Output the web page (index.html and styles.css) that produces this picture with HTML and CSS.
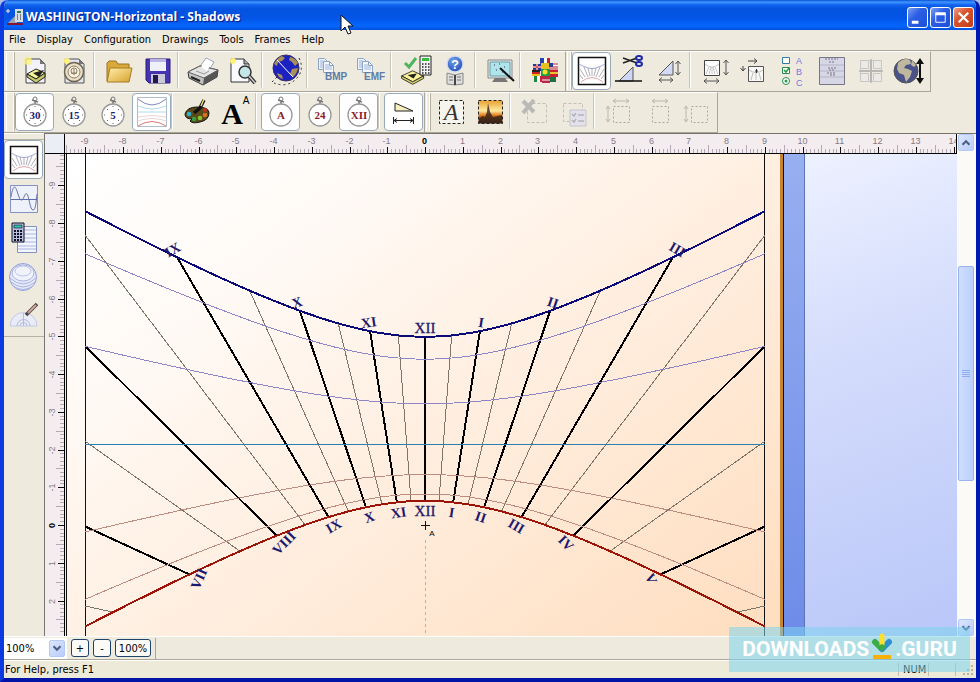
FILE: index.html
```html
<!DOCTYPE html>
<html lang="en">
<head>
<meta charset="utf-8">
<title>WASHINGTON-Horizontal - Shadows</title>
<link rel="stylesheet" href="styles.css">
</head>
<body>
<svg class="defs" aria-hidden="true">
  <defs>
    <linearGradient id="paper" x1="0" y1="0" x2="1" y2="0.9"><stop offset="0" stop-color="#ffffff"/><stop offset=".25" stop-color="#fffaf6"/><stop offset=".5" stop-color="#fff1e5"/><stop offset="1" stop-color="#ffdfc2"/></linearGradient>
    <linearGradient id="band" x1="0" y1="0" x2="0" y2="1"><stop offset="0" stop-color="#98aff0"/><stop offset=".6" stop-color="#6e8ce8"/></linearGradient>
    <linearGradient id="sky" gradientUnits="userSpaceOnUse" x1="805" y1="154" x2="980" y2="640"><stop offset="0" stop-color="#edf1ff"/><stop offset=".35" stop-color="#d6defc"/><stop offset="1" stop-color="#b8c5f8"/></linearGradient>
    <linearGradient id="gold" x1="0" y1="0" x2="1" y2="1"><stop offset="0" stop-color="#fff0a8"/><stop offset="1" stop-color="#d8a030"/></linearGradient>
    <linearGradient id="sunset" x1="0" y1="0" x2="0" y2="1"><stop offset="0" stop-color="#e8a030"/><stop offset=".45" stop-color="#ffe9a0"/><stop offset=".65" stop-color="#e07818"/><stop offset="1" stop-color="#50200c"/></linearGradient>
    <radialGradient id="ball" cx=".4" cy=".3" r=".8"><stop offset="0" stop-color="#6fa0ee"/><stop offset="1" stop-color="#1c48b0"/></radialGradient>
    <clipPath id="dial-clip"><rect x="85" y="154" width="680" height="800"/></clipPath>
    <symbol id="i-chart" viewBox="0 0 32 32">
      <rect x="2.500" y="2.500" width="27" height="27" fill="#fff" stroke="#111" stroke-width="1.500"/>
      <path d="M3 9l4 2 5 2 4 .5 4-.5 5-2 4-2" fill="none" stroke="#a3acd8"/>
      <path d="M4 14l5 8M4 20l3 4M8 12l4 10M12 13l2 8M16 13v8M20 13l-2 8M24 12l-4 10M28 14l-5 8M28 20l-3 4" stroke="#8d8d9c" stroke-width=".7"/>
      <path d="M5 27q11-9 22 0" fill="none" stroke="#e0a4aa"/>
    </symbol>
    <symbol id="i-watch" viewBox="0 0 32 32">
      <circle cx="16" cy="3" r="2" fill="none" stroke="#777"/><path d="M13 4l6 2M16 5v3" stroke="#777" stroke-width="1.500"/>
      <circle cx="16" cy="19" r="11" fill="#fff" stroke="#999" stroke-width="1.300"/>
      <path d="M16 10v1M16 27v1M7 19h1M24 19h1M10 13l1 1M22 13l-1 1M10 25l1-1M22 25l-1-1" stroke="#666"/>
    </symbol>
    <symbol id="i-docs" viewBox="0 0 32 32">
      <path d="M2.500 3.500h6l3 3v8h-9z" fill="#eef4fc" stroke="#8ea4c6"/><path d="M4 6h4M4 8h5M4 10h5M4 12h5" stroke="#9db4d8"/>
      <path d="M7.500 6.500h6l4 4v7h-10z" fill="#f4f8fe" stroke="#8ea4c6"/><path d="M13.500 6.500v4h4" fill="none" stroke="#8ea4c6"/>
      <path d="M9 10h4M9 12h7M9 14h7" stroke="#9db4d8"/>
    </symbol>
    <symbol id="i-dial" viewBox="0 0 32 32">
      <path d="M2 7L15 14 28 7 15 1z" fill="#fbf39a" stroke="#222"/><path d="M2 7v3l13 7 13-7V7L15 14z" fill="#d9cf70" stroke="#222"/><path d="M9 6l11-2-4 6z" fill="#222"/>
    </symbol>
  </defs>
</svg>

<div class="window">
  <header class="titlebar">
    <svg class="app-icon" viewBox="0 0 18 18" aria-hidden="true"><path d="M2 15L11 6v9z" fill="#9aa3ae"/><path d="M1 15h16v2H1z" fill="#8a1230"/><path d="M9 1h8v13H9z" fill="#d6dee8"/><path d="M11 3h4v2h-4z" fill="#2b7a48"/><path d="M11 7h1M14 7h1M11 9h1M14 9h1M11 11h1M14 11h1" stroke="#222"/><path d="M2 1v4M0 3h4" stroke="#ffe9d0"/></svg>
    <h1>WASHINGTON-Horizontal - Shadows</h1>
    <div class="caption-buttons">
      <button class="cap" aria-label="Minimize"><svg viewBox="0 0 20 20"><path d="M4 15h7" stroke="#fff" stroke-width="3"/></svg></button>
      <button class="cap" aria-label="Maximize"><svg viewBox="0 0 20 20"><path d="M5 6.500h10V15H5z" fill="none" stroke="#fff"/><path d="M4.500 6h11" stroke="#fff" stroke-width="3"/></svg></button>
      <button class="cap close" aria-label="Close"><svg viewBox="0 0 20 20"><path d="M5 5l10 10M15 5L5 15" stroke="#fff" stroke-width="2.300"/></svg></button>
    </div>
  </header>

  <nav class="menubar">
    <a href="#">File</a><a href="#">Display</a><a href="#">Configuration</a><a href="#">Drawings</a><a href="#">Tools</a><a href="#">Frames</a><a href="#">Help</a>
  </nav>

  <div class="toolrow">
    <div class="toolbar">
      <i class="grip"></i>
      <button class="tb" aria-label="New sundial"><svg viewBox="0 0 32 32"><path d="M7 4h14l5 5v19H7z" fill="#f2f2fa" stroke="#444"/><path d="M21 4v5h5z" fill="#777"/><circle cx="9" cy="6" r="4" fill="#fdf37a" opacity=".8"/><path d="M8 19l9-5 9 4-9 6z" fill="#f3f39a" stroke="#222"/><path d="M8 19v3l9 6 9-6v-4l-9 6z" fill="#c9c96a" stroke="#222"/><path d="M14 18l11-3-5 7z" fill="#222"/></svg></button>
      <button class="tb" aria-label="New astrolabe"><svg viewBox="0 0 32 32"><path d="M7 4h14l5 5v19H7z" fill="#e4e4ea" stroke="#555"/><path d="M21 4v5h5z" fill="#777"/><circle cx="9" cy="6" r="3" fill="#fdf37a"/><circle cx="16" cy="17" r="9.500" fill="#ebe0c8" stroke="#6b6252" stroke-width="1.500"/><circle cx="16" cy="17" r="6" fill="#f7f0e0" stroke="#8d8064"/><circle cx="16" cy="16" r="3" fill="none" stroke="#8d8064"/><path d="M13 18h6M16 14v6" stroke="#8d8064"/></svg></button>
      <i class="sep"></i>
      <button class="tb" aria-label="Open"><svg viewBox="0 0 32 32"><path d="M4 26V8l2-2h7l2 3h11v4" fill="#d9a93c" stroke="#9c7420"/><path d="M4 27l3-14h22l-3 14z" fill="url(#gold)" stroke="#a47c24"/></svg></button>
      <button class="tb" aria-label="Save"><svg viewBox="0 0 32 32"><path d="M4 4h24v24H7l-3-3z" fill="#4633b0" stroke="#2a1c7a"/><path d="M8 4h16v12H8z" fill="#eef0fa"/><path d="M8 4h16v3H8z" fill="#bcb4e4"/><path d="M9 19h14v9H9z" fill="#c9cad6"/><path d="M11 20h5v8h-5z" fill="#24184f"/></svg></button>
      <i class="sep"></i>
      <button class="tb" aria-label="Print"><svg viewBox="0 0 32 32"><path d="M12 13l7-10 8 4-6 10z" fill="#fff" stroke="#9aa4c0"/><path d="M1 17l12-6 18 4-1 7-14 8L2 23z" fill="#c2c2c2" stroke="#333"/><path d="M1 17l12-6 18 4-14 8z" fill="#e4e4e4" stroke="#666"/><path d="M17 23l14-8-1 7-14 8z" fill="#555"/><path d="M4 22l9 4" stroke="#222" stroke-width="2"/><path d="M14 12l6-8 5 3-5 9z" fill="#fff"/><path d="M9 16l8 3 5-3" fill="none" stroke="#999"/></svg></button>
      <button class="tb" aria-label="Print preview"><svg viewBox="0 0 32 32"><path d="M5 4h13l5 5v18H5z" fill="#fafafe" stroke="#333"/><path d="M18 4v5h5" fill="#aaa" stroke="#333"/><circle cx="7" cy="6" r="3" fill="#fdf37a"/><circle cx="19" cy="17" r="6" fill="#c5e6e6" stroke="#333" stroke-width="1.500"/><path d="M23 21l6 7" stroke="#333" stroke-width="4"/><path d="M23 21l6 7" stroke="#ccc" stroke-width="1.500"/></svg></button>
      <i class="sep"></i>
      <button class="tb" aria-label="Location"><svg viewBox="0 0 32 32"><circle cx="15" cy="13" r="13" fill="#1b22c0" stroke="#3a3060"/><path d="M3 9q3-6 8-8l3 2-3 3-4 1-1 4zM19 2q5 1 8 6l-3 3-3-4-3-2zM21 14l6-1q-1 6-5 9l-3-3zM6 18l5 2 1 4q-5-1-6-6z" fill="#a8905c"/><path d="M6 5l16 17" stroke="#fff"/><path d="M28 3q6 12-3 21T3 28M1 27l5-5" fill="none" stroke="#222" stroke-dasharray="2 3"/></svg></button>
      <i class="sep"></i>
      <button class="tb" aria-label="Copy as BMP"><svg viewBox="0 0 32 32"><use href="#i-docs" width="32" height="32"/><text x="9" y="25" class="fmt">BMP</text></svg></button>
      <button class="tb" aria-label="Copy as EMF"><svg viewBox="0 0 32 32"><use href="#i-docs" width="32" height="32"/><text x="9" y="25" class="fmt">EMF</text></svg></button>
      <i class="sep"></i>
      <button class="tb" aria-label="Solar calculator"><svg viewBox="0 0 32 32"><use href="#i-dial" x="0" y="15" width="27" height="27"/><path d="M20 1h11v19H20z" fill="#f2f2f2" stroke="#222"/><path d="M22 3h7v3h-7z" fill="#2fbf3a"/><path d="M22 9h8M22 12h8M22 15h8M22 18h8" stroke="#222" stroke-width="1.500" stroke-dasharray="1.500 1.500"/><path d="M5 8l4 4 7-9" fill="none" stroke="#4fb45c" stroke-width="3"/></svg></button>
      <button class="tb" aria-label="Help contents"><svg viewBox="0 0 32 32"><path d="M8 18l8 2 8-2v11l-8 1-8-1z" fill="#ddd" stroke="#888"/><path d="M16 20v10" stroke="#444" stroke-width="2"/><path d="M10 22h4M10 25h4M18 22h4M18 25h4" stroke="#777"/><circle cx="16" cy="9" r="8" fill="url(#ball)" stroke="#d5dcf0" stroke-width="1.500"/><text x="16" y="14" class="q">?</text></svg></button>
      <i class="sep"></i>
      <button class="tb" aria-label="Simulation"><svg viewBox="0 0 32 32"><path d="M4 5h24v18H4z" fill="#e8eaea" stroke="#888"/><path d="M6 7h20v14H6z" fill="#aee4ea" stroke="#6a9ea8"/><path d="M10 10h1M15 9h1M20 12h1M12 15h1M18 17h1" stroke="#335"/><path d="M11 23h10l3 4H8z" fill="#777"/><path d="M16 13l14 13" stroke="#111" stroke-width="2"/></svg></button>
      <i class="sep"></i>
      <button class="tb" aria-label="Language"><svg viewBox="0 0 32 32"><path d="M11 3h4v7h-4z" fill="#2446a8"/><path d="M15 3h3v7h-3z" fill="#fff"/><path d="M18 3h3v7h-3z" fill="#c82030"/><path d="M4 9h8v7H4z" fill="#203c98"/><path d="M4 12h8M8 9v7" stroke="#fff" stroke-width="2"/><path d="M4 12h8M8 9v7" stroke="#d02030"/><path d="M12 8h8v6h-8z" fill="#e8c020"/><path d="M20 8h9v7h-9z" fill="#f2f2f2"/><path d="M20 9h9M20 12h9M20 14h9" stroke="#c82030"/><path d="M20 8h4v4h-4z" fill="#25409a"/><path d="M3 15h8v2H3z" fill="#222"/><path d="M3 17h8v2H3z" fill="#d02020"/><path d="M3 19h8v2H3z" fill="#e8c020"/><path d="M12 14h9v7h-9z" fill="#1f9a3c"/><circle cx="16" cy="17" r="2.500" fill="#f6e030"/><path d="M21 15h8v7h-8z" fill="#c82030"/><path d="M21 18h8" stroke="#f0c030" stroke-width="2"/><path d="M5 21h3v6H5z" fill="#198a40"/><path d="M8 21h3v6H8z" fill="#fff"/><path d="M11 21h2v6h-2z" fill="#d02030"/><path d="M13 21h8v7h-8z" fill="#b82848"/><path d="M13 25h8" stroke="#fff"/><path d="M21 22h6v5h-6z" fill="#207040"/></svg></button>
    </div>
    <div class="toolbar">
      <i class="grip slim"></i>
      <button class="tb on" aria-label="Sundial view"><svg viewBox="0 0 32 32"><use href="#i-chart" width="32" height="32"/></svg></button>
      <button class="tb" aria-label="Cut style"><svg viewBox="0 0 32 32"><path d="M4 26L18 12v14z" fill="#cfd6f4" stroke="#555"/><path d="M0 26h27" stroke="#111" stroke-width="1.500"/><path d="M8 3l14 5M8 8l14-5" stroke="#222" stroke-width="1.500"/><ellipse cx="24" cy="3" rx="3" ry="2" fill="none" stroke="#1c28a8" stroke-width="2"/><ellipse cx="24" cy="9" rx="3" ry="2" fill="none" stroke="#1c28a8" stroke-width="2"/></svg></button>
      <button class="tb" aria-label="Style size"><svg viewBox="0 0 32 32"><path d="M5 20L19 6v14z" fill="#d3daf6" stroke="#555"/><path d="M24 6v14M21.500 9L24 6l2.500 3M21.500 17l2.500 3 2.500-3M5 25h14M8 22.500L5 25l3 2.500M16 22.500l3 2.500-3 2.500" fill="none" stroke="#555"/></svg></button>
      <i class="sep"></i>
      <button class="tb" aria-label="Dial size"><svg viewBox="0 0 32 32"><path d="M5.500 5.500h15v15h-15z" fill="#fff" stroke="#444"/><path d="M6 9q7 6 14 0M7 19l3-7M10 19l2-7M13 19v-7M16 19l-2-7M19 19l-3-7" fill="none" stroke="#c5c5c5"/><path d="M27 5v15M24.500 8L27 5l2.500 3M24.500 17l2.500 3 2.500-3M5 26h15M8 23.500L5 26l3 2.500M17 23.500l3 2.500-3 2.500" fill="none" stroke="#555"/></svg></button>
      <button class="tb" aria-label="Dial position"><svg viewBox="0 0 32 32"><path d="M10.500 11.500h15v15h-15z" fill="#f9f9f5" stroke="#555"/><path d="M11 15q7 5 14 0M13 25l2-7M18 25v-7M23 25l-2-7" fill="none" stroke="#bbb"/><path d="M17 16h3M18.500 14v4" stroke="#333"/><path d="M10 6h9M16 3.500L19 6l-3 2.500M5 11v5M2.500 13L5 16l2.500-3" fill="none" stroke="#444"/></svg></button>
      <button class="tb" aria-label="Options"><svg viewBox="0 0 32 32"><path d="M5.500 2.500h7v6h-7z" fill="#fff" stroke="#2f7f9f"/><path d="M5.500 12.500h7v6h-7z" fill="#fff" stroke="#2a8a50"/><path d="M7 15l2 2 3-4" fill="none" stroke="#1f9a40" stroke-width="1.500"/><circle cx="9" cy="26" r="3.500" fill="#fff" stroke="#2a8a50"/><circle cx="9" cy="26" r="1.500" fill="#2a9a50"/><text x="19" y="9" class="abc">A</text><text x="19" y="20" class="abc">B</text><text x="19" y="31" class="abc">C</text></svg></button>
      <button class="tb" aria-label="Data sheet"><svg viewBox="0 0 32 32"><path d="M3.500 2.500h25v27h-25z" fill="#d6d6e4" stroke="#777788"/><path d="M4 10h24M4 16h24M4 22h24" stroke="#b4b4c8"/><path d="M9 4h13M13 7h6M12 13h9M13 15h5M11 18h9M14 20h5" stroke="#777788" stroke-dasharray="2 1"/></svg></button>
      <button class="tb" aria-label="Alignment"><svg viewBox="0 0 32 32"><path d="M5.500 5.500h8v8h-8zM18.500 5.500h8v8h-8zM5.500 18.500h8v8h-8zM18.500 18.500h8v8h-8z" fill="#eceae6" stroke="#c8c6c4"/><path d="M16 4v24M4 16h24" stroke="#b9b7b6" stroke-width="2"/><path d="M13 7l3-3 3 3M13 25l3 3 3-3M7 13l-3 3 3 3M25 13l3 3-3 3" fill="none" stroke="#c9c7c4"/></svg></button>
      <button class="tb" aria-label="Globe height"><svg viewBox="0 0 32 32"><circle cx="12" cy="16" r="12" fill="#4a5288" stroke="#555"/><path d="M4 8q6-6 12-3l1 4-5 1-2 3 4 1 4 2-2 6-4 5-2-7-5-2-2-4zM18 5l4 5-2 2-3-2z" fill="#bdb89e"/><path d="M26 5v22" stroke="#111" stroke-width="2"/><path d="M22 9l4-6 4 6zM22 23l4 6 4-6z" fill="#111"/></svg></button>
    </div>
  </div>

  <div class="toolrow">
    <div class="toolbar">
      <i class="grip"></i>
      <button class="tb on" aria-label="30 minutes"><svg viewBox="0 0 32 32"><use href="#i-watch" width="32" height="32"/><text x="16" y="23" class="num">30</text></svg></button>
      <button class="tb" aria-label="15 minutes"><svg viewBox="0 0 32 32"><use href="#i-watch" width="32" height="32"/><text x="16" y="23" class="num">15</text></svg></button>
      <button class="tb" aria-label="5 minutes"><svg viewBox="0 0 32 32"><use href="#i-watch" width="32" height="32"/><text x="16" y="23" class="num">5</text></svg></button>
      <button class="tb on" aria-label="Declination arcs"><svg viewBox="0 0 32 32"><path d="M1.500 1.500h29v29h-29z" fill="#fff" stroke="#aebccc"/><path d="M2 3q14 12 28 0" fill="none" stroke="#8088b8"/><path d="M2 10q14 6 28 0M2 16h28" fill="none" stroke="#b4d8ea"/><path d="M2 21q14-3 28 0M2 25q14-5 28 0" fill="none" stroke="#eed4d4"/><path d="M2 30q14-9 28 0" fill="none" stroke="#d87878"/></svg></button>
      <i class="sep"></i>
      <button class="tb" aria-label="Colors"><svg viewBox="0 0 32 32"><path d="M4 18q2-7 12-7 12 0 12 6 0 7-9 9-8 2-10-1l2-2q-7 0-7-5z" fill="#5a4a18" stroke="#111"/><circle cx="8" cy="18" r="2.300" fill="#30b0d0"/><circle cx="13" cy="23" r="2.300" fill="#30a040"/><circle cx="19" cy="22" r="2.300" fill="#88c030"/><circle cx="24" cy="19" r="2.300" fill="#d8701c"/><circle cx="24" cy="14" r="2" fill="#c83020"/><path d="M13 17l6-5 4-8" fill="none" stroke="#111" stroke-width="3.500"/><path d="M20 10l3-7" stroke="#f4e070" stroke-width="1.500"/></svg></button>
      <button class="tb" aria-label="Font"><svg viewBox="0 0 32 32"><text x="12" y="28" class="big-a">A</text><text x="26" y="8" class="small-a">A</text></svg></button>
      <i class="sep"></i>
      <button class="tb on" aria-label="Arabic numerals"><svg viewBox="0 0 32 32"><use href="#i-watch" width="32" height="32"/><circle cx="16" cy="19" r="10" fill="#fff"/><text x="16" y="23" class="num red">A</text></svg></button>
      <button class="tb" aria-label="24 hours"><svg viewBox="0 0 32 32"><use href="#i-watch" width="32" height="32"/><circle cx="16" cy="19" r="10" fill="#fff"/><text x="16" y="23" class="num red">24</text></svg></button>
      <button class="tb on" aria-label="Roman numerals"><svg viewBox="0 0 32 32"><use href="#i-watch" width="32" height="32"/><circle cx="16" cy="19" r="10" fill="#fff"/><text x="16" y="23" class="num red">XII</text></svg></button>
      <i class="sep"></i>
      <button class="tb on" aria-label="Dimensions"><svg viewBox="0 0 32 32"><path d="M7 7v8h18z" fill="#f7efc0" stroke="#222"/><path d="M5.500 21v7M25.500 21v7M6 24.500h20M9 22.500l-3 2 3 2M22 22.500l3 2-3 2" fill="none" stroke="#222"/></svg></button>
    </div>
    <div class="toolbar">
      <i class="grip slim"></i>
      <button class="tb" aria-label="Text frame"><svg viewBox="0 0 32 32"><path d="M4.500 4.500h24v23h-24z" fill="#f6f4ee" stroke="#222" stroke-dasharray="3 2"/><text x="16" y="24" class="ital">A</text></svg></button>
      <button class="tb" aria-label="Picture frame"><svg viewBox="0 0 32 32"><path d="M4.500 4.500h24v23h-24z" fill="url(#sunset)" stroke="#222" stroke-dasharray="3 2"/><path d="M5 22l4-2 2 1 2-5 1-9 2 9 3 5 9-2v8H5z" fill="#30201c" opacity=".8"/></svg></button>
      <i class="sep"></i>
      <button class="tb" disabled aria-label="Delete frame"><svg viewBox="0 0 32 32"><path d="M8.500 7.500h19v19h-19z" fill="none" stroke="#c2bfb6" stroke-dasharray="3 2"/><path d="M4 5l11 11M15 4L4 17" stroke="#b9b9b6" stroke-width="4"/></svg></button>
      <button class="tb" disabled aria-label="Frame properties"><svg viewBox="0 0 32 32"><path d="M5.500 7.500h19v18h-19z" fill="none" stroke="#c2bfb6" stroke-dasharray="3 2"/><path d="M12 14h16v16H12z" fill="#e3e2ec" stroke="#c5c4cc"/><path d="M14 18l2 2 2-3M14 24l2 2 2-3M20 19h6M20 25h6" fill="none" stroke="#b2b2ba" stroke-width="1.500"/></svg></button>
      <i class="sep"></i>
      <button class="tb" disabled aria-label="Same size"><svg viewBox="0 0 32 32"><path d="M10.500 10.500h16v16h-16z" fill="none" stroke="#aaa79c" stroke-dasharray="2 2"/><path d="M10 5h16M13 3l-3 2 3 2M23 3l3 2-3 2M5 10v16M3 13l2-3 2 3M3 23l2 3 2-3" fill="none" stroke="#bbb8ae"/></svg></button>
      <button class="tb" disabled aria-label="Same width"><svg viewBox="0 0 32 32"><path d="M10.500 10.500h16v16h-16z" fill="none" stroke="#aaa79c" stroke-dasharray="2 2"/><path d="M10 5h16M13 3l-3 2 3 2M23 3l3 2-3 2" fill="none" stroke="#bbb8ae"/></svg></button>
      <button class="tb" disabled aria-label="Same height"><svg viewBox="0 0 32 32"><path d="M10.500 10.500h16v16h-16z" fill="none" stroke="#aaa79c" stroke-dasharray="2 2"/><path d="M5 10v16M3 13l2-3 2 3M3 23l2 3 2-3" fill="none" stroke="#bbb8ae"/></svg></button>
    </div>
  </div>

  <main class="main">
    <aside class="sidebar">
      <div class="views">
        <button class="tb on" aria-label="Sundial"><svg viewBox="0 0 32 32"><use href="#i-chart" width="32" height="32"/></svg></button>
        <button class="tb" aria-label="Graph"><svg viewBox="0 0 32 32"><path d="M2.500 2.500h27v27h-27z" fill="#eef0fa" stroke="#8591c0"/><path d="M3 16.500h26" stroke="#5c6cae"/><path d="M3 14C5 2 7 2 9 8S12 18 14 17 17 9 19 11 22 27 25 27 28 18 29 11" fill="none" stroke="#6874a8"/></svg></button>
        <button class="tb" aria-label="Tables"><svg viewBox="0 0 32 32"><path d="M9.500 4.500h19v26h-19z" fill="#f4f6ff" stroke="#8591c0"/><path d="M15 8h13M15 12h13M15 16h13M15 20h13M10 24h18M10 27h18" stroke="#a9b4de"/><path d="M4 1h12v19H4z" fill="#b9bfe0" stroke="#112"/><path d="M6 3h8v3H6z" fill="#2fc0b0" stroke="#112" stroke-width=".6"/><path d="M6 9h9M6 12h9M6 15h9M6 18h9" stroke="#112" stroke-width="2" stroke-dasharray="2 1"/></svg></button>
        <button class="tb" aria-label="Globe"><svg viewBox="0 0 32 32"><circle cx="15" cy="16" r="13.500" fill="#e6e9f8" stroke="#93a0d8"/><ellipse cx="15" cy="12" rx="11" ry="8" fill="#f0f2fc" stroke="#aab4e0"/><ellipse cx="15" cy="10" rx="8" ry="5" fill="none" stroke="#bcc4e8"/><path d="M2 17q13 12 26 0M3 21q12 10 24 0M5 25q10 7 20 0" fill="none" stroke="#aab4e0"/></svg></button>
        <button class="tb" aria-label="Protractor"><svg viewBox="0 0 32 32"><path d="M2 26a13 13 0 0 1 27 0z" fill="#e9ebf6" stroke="#c3cae8"/><path d="M9 26a6 6 0 0 1 13 0M12 26a3 3 0 0 1 7 0M15.500 13v13" fill="none" stroke="#b4bce2"/><path d="M18 15l11-11" stroke="#4a4444" stroke-width="3.500"/><path d="M20 13l8-8" stroke="#cfa79a" stroke-width="2"/></svg></button>
      </div>
    </aside>

    <section class="workspace">
      <div class="corner"></div>
      <div class="ruler-x"><svg id="ruler-x" aria-hidden="true"></svg></div>
      <div class="ruler-y"><svg id="ruler-y" aria-hidden="true"></svg></div>
      <div class="canvas">
        <svg role="img" aria-label="Horizontal sundial drawing">
          <g transform="translate(-65 -154)">
            <rect x="66" y="100" width="715" height="900" fill="#ffe3ca"/>
            <rect x="66" y="154" width="715" height="482" fill="url(#paper)"/>
            <rect x="780" y="100" width="3" height="800" fill="#c8832e"/>
            <rect x="783" y="100" width="1" height="800" fill="#111"/>
            <rect x="784" y="154" width="20" height="800" fill="url(#band)"/>
            <rect x="804" y="154" width="1" height="800" fill="#5c74b4"/>
            <rect x="805" y="154" width="1600" height="800" fill="url(#sky)"/>
            <g shape-rendering="crispEdges">
              <path d="M66.500 154v800M85.500 154v800M764.500 154v800" stroke="#111"/>
              <path d="M425.500 540v400" stroke="#c0b0a4" stroke-dasharray="3 3"/>
              <path d="M421 525.500h9M425.500 521v9" stroke="#111"/>
            </g>
            <g id="dial" clip-path="url(#dial-clip)" fill="none"></g>
            <g id="numerals" class="numerals"></g>
            <text x="432" y="536" class="mark">A</text>
          </g>
        </svg>
      </div>
    </section>

    <div class="scrollbar">
      <button class="arrow" aria-label="Scroll up"><svg viewBox="0 0 16 16"><path d="M4 10l4-4 4 4" fill="none" stroke="#4d6185" stroke-width="2.500"/></svg></button>
      <div class="track"><div class="thumb"><svg viewBox="0 0 8 8"><path d="M0 .5h8M0 2.500h8M0 4.500h8M0 6.500h8" stroke="#8fadec"/></svg></div></div>
      <button class="arrow" aria-label="Scroll down"><svg viewBox="0 0 16 16"><path d="M4 6l4 4 4-4" fill="none" stroke="#4d6185" stroke-width="2.500"/></svg></button>
    </div>
  </main>

  <div class="zoombar">
    <div class="zoom-select">
      <select aria-label="Zoom"><option>100%</option></select>
      <span class="drop"><svg viewBox="0 0 16 16"><path d="M4 6l4 4 4-4" fill="none" stroke="#4d6185" stroke-width="2.500"/></svg></span>
    </div>
    <button class="zb">+</button><button class="zb">-</button><button class="zb wide">100%</button>
    <i class="bar"></i>
  </div>

  <footer class="status">
    <span class="hint">For Help, press F1</span>
    <span class="cell">NUM</span><span class="cell blank"></span>
    <svg class="size-grip" viewBox="0 0 12 12" aria-hidden="true"><path d="M9 1h2v2H9zM5 5h2v2H5zM9 5h2v2H9zM1 9h2v2H1zM5 9h2v2H5zM9 9h2v2H9z" fill="#b8b4a2"/></svg>
  </footer>
</div>

<svg class="cursor" viewBox="0 0 14 22" aria-hidden="true"><path d="M1 1v16l4-4 3 7 3-1-3-7h5z" fill="#fff" stroke="#111"/></svg>

<div class="watermark">
  <span>DOWNLOADS</span>
  <svg viewBox="0 0 22 28" aria-hidden="true"><path d="M4 9l7 7" stroke="#3bab48" stroke-width="6" stroke-linecap="round"/><path d="M18 9l-7 7" stroke="#2b8fd0" stroke-width="6" stroke-linecap="round"/><path d="M11 3v9" stroke="#fbe02c" stroke-width="5" stroke-linecap="round"/><path d="M7 13l4-2 4 2-4 6z" fill="#3bab48"/><rect x="2" y="22" width="18" height="4" rx="1" fill="#f9b000"/></svg>
  <span>.GURU</span>
</div>
<script src="script.js"></script>
</body>
</html>
```

FILE: styles.css
```css
* { box-sizing: border-box; }
html, body { height: 100%; }
body {
  margin: 0;
  background: #a9bfe6;
  font-family: "DejaVu Sans Condensed", "DejaVu Sans", sans-serif;
  font-size: 11px;
  color: #000;
  overflow: hidden;
}
button { font: inherit; padding: 0; border: 0; background: none; color: inherit; }
svg { display: block; }
.defs { position: absolute; width: 0; height: 0; }

.window {
  display: flex;
  flex-direction: column;
  min-height: 100vh;
  background: #eeeade;
  border: 4px solid #0831d9;
  border-top: 0;
  border-color: #0831d9 #0019b0 #0014a8 #0b3be0;
  border-radius: 8px 8px 0 0;
  overflow: hidden;
}

.titlebar {
  display: flex;
  align-items: center;
  gap: 2px;
  height: 30px;
  margin: 0 -4px;
  padding: 4px 6px 0;
  background: linear-gradient(#0a50d8 0, #3f96ff 2px, #0f62ee 5px, #0453e0 9px, #0355e6 18px, #0466ff 26px, #0250d8 30px);
}
.app-icon { width: 18px; height: 18px; }
.titlebar h1 {
  flex: 1;
  margin: 0;
  color: #fff;
  font: bold 12px/20px "Open Sans", sans-serif;
  text-shadow: 1px 1px 1px #0a1883;
}
.caption-buttons { display: flex; gap: 2px; }
.cap {
  width: 21px;
  height: 21px;
  border: 1px solid #fff;
  border-radius: 3px;
  background: linear-gradient(135deg, #7ba0f4, #2c5fe4 40%, #1c4fd8);
}
.close { background: linear-gradient(135deg, #f0a088, #d8542c 40%, #c43c18); }

.menubar { display: flex; align-items: center; gap: 11px; height: 21px; padding: 0 5px 2px; border-bottom: 1px solid #aca899; }
.menubar a { color: #000; text-decoration: none; }

.toolrow { display: flex; height: 41px; }
.toolbar {
  display: flex;
  align-items: flex-start;
  border-top: 1px solid #fff;
  border-right: 1px solid #a9a698;
  border-bottom: 1px solid #a9a698;
  padding-right: 1px;
}
.grip { width: 8px; height: 38px; margin: 0 0 0 2px; border: solid #fff; border-width: 0 1px; box-shadow: 1px 0 #b5b2a4; }
.toolbar .grip { margin-right: 1px; }
.grip.slim { width: 4px; margin-left: 1px; }
.tb { display: grid; place-items: center; width: 39px; height: 38px; border: 1px solid transparent; border-radius: 4px; }
.tb svg { width: 32px; height: 32px; overflow: visible; }
.tb.on { background: #fefefe; border-color: #98a9b8; }
.sep { width: 6px; height: 36px; border-left: 1px solid #c8c5b6; margin: 0; background: linear-gradient(90deg, #fff 1px, transparent 1px); }

.fmt { font: bold 10px "Liberation Sans", sans-serif; fill: #5f7ba6; }
.q { font: bold 13px "Liberation Sans", sans-serif; fill: #fff; text-anchor: middle; }
.abc { font: 9px "Liberation Sans", sans-serif; fill: #7a72e0; }
.num { font: bold 11px "Liberation Serif", serif; fill: #202470; text-anchor: middle; }
.num.red { fill: #8c1c2c; }
.big-a { font: bold 30px "Liberation Serif", serif; text-anchor: middle; }
.small-a { font: 10px "Liberation Sans", sans-serif; text-anchor: middle; }
.ital { font: italic 24px "Liberation Serif", serif; text-anchor: middle; fill: #333; }

.main { display: flex; flex: 1; min-height: 0; }
.sidebar { width: 40px; padding-top: 5px; border-top: 1px solid #fff; }
.views { border-bottom: 1px solid #b5b2a4; padding: 0 0 1px; border-top: 1px solid #b5b2a4; }
.sidebar .tb { height: 39px; }

.workspace {
  display: grid;
  flex: 1;
  grid-template-columns: 20px 1fr;
  grid-template-rows: 20px 1fr;
  min-width: 0;
  border: solid #77756c;
  border-width: 1px 0 0 1px;
}
.corner, .ruler-x { background: #f4edef; border-bottom: 1px solid #000; }
.corner { background: #eceef6; border-right: 1px solid #000; }
.ruler-x { border-right: 1px solid #000; }
.ruler-y { background: #f4edef; border-right: 1px solid #000; }
.ruler-x, .ruler-y, .canvas { position: relative; overflow: hidden; min-width: 0; min-height: 0; }
.ruler-x svg, .ruler-y svg, .canvas svg { position: absolute; width: 100%; height: 100%; }
.scale text { font: 9px "Liberation Sans", sans-serif; fill: #857a86; text-anchor: middle; }
.scale text.zero { fill: #000; font-weight: bold; }
.numerals { font: bold 14px "Liberation Serif", serif; fill: #1c1a6c; text-anchor: middle; }
.numerals .noon { font-weight: normal; font-size: 15px; stroke: #1c1a6c; stroke-width: 0.3px; }
.mark { font: 8px "Liberation Sans", sans-serif; text-anchor: middle; }

.scrollbar { display: flex; flex-direction: column; width: 19px; padding: 0 1px; background: #fbfaf6; border-top: 1px solid #77756c; }
.arrow, .drop {
  width: 16px;
  height: 17px;
  border: 1px solid #b4c8f4;
  border-radius: 2px;
  background: linear-gradient(135deg, #dbe6ff, #b9cdfb);
}
.track { display: grid; grid-template-rows: 115fr 215fr 138fr; flex: 1; }
.thumb {
  grid-row: 2;
  display: grid;
  place-items: center;
  width: 16px;
  border: 1px solid #98b3ee;
  border-radius: 2px;
  background: linear-gradient(90deg, #cfdefd, #bcd0fc);
}
.thumb svg { width: 8px; height: 8px; }

.zoombar { display: flex; align-items: center; gap: 4px; height: 24px; border-top: 1px solid #fff; border-bottom: 1px solid #aca899; }
.zoom-select { display: flex; align-items: center; width: 63px; height: 21px; background: #fff; padding-right: 2px; }
.zoom-select select { flex: 1; min-width: 0; appearance: none; border: 0; background: none; padding: 0 0 0 2px; font: inherit; color: #000; }
.zb { width: 18px; height: 18px; border: 1px solid #1d4468; border-radius: 3px; background: #fbfaf7; line-height: 15px; }
.zb.wide { width: 36px; }
.bar { width: 1px; height: 21px; background: #aca899; }

.status { display: flex; align-items: center; height: 18px; padding: 0 2px 0 1px; border-top: 1px solid #fff; background: #eeeada; }
.hint { flex: 1; }
.cell { width: 30px; padding-left: 4px; border-left: 1px solid #c4c0ae; line-height: 13px; }
.cell.blank { width: 28px; height: 13px; border-right: 1px solid #c4c0ae; }
.size-grip { width: 12px; height: 12px; margin-left: 6px; }

.cursor { position: absolute; left: 340px; top: 14px; width: 14px; height: 22px; }
.watermark {
  position: absolute;
  right: 10px;
  bottom: 10px;
  display: flex;
  align-items: center;
  justify-content: center;
  width: 241px;
  height: 45px;
  background: rgba(126, 211, 238, 0.55);
  color: #fff;
  font: bold 21px/45px Roboto, "Open Sans", sans-serif;
}
.watermark svg { width: 22px; height: 28px; margin: 0 2px 6px; }
```

FILE: script.js
```js
// Draws the rulers and the sundial hour lines, declination arcs and numerals.
(function () {
  var NS = "http://www.w3.org/2000/svg";
  var UNIT = 37.75, X0 = 425, Y0 = 525;
  var RAD = Math.PI / 180;

  function add(parent, name, attrs, text) {
    var el = document.createElementNS(NS, name);
    Object.keys(attrs).forEach(function (k) { el.setAttribute(k, attrs[k]); });
    if (text !== undefined) el.textContent = text;
    parent.appendChild(el);
    return el;
  }

  function ruler(svg, vertical, origin, from, to) {
    var g = add(svg, "g", { class: "scale", "shape-rendering": "crispEdges" });
    for (var t = from * 10 - 8; t <= to * 10 + 8; t++) {
      var p = Math.round(origin + t * UNIT / 10) + 0.5;
      var major = t % 10 === 0, half = t % 5 === 0;
      var start = major ? 13 : half ? 11 : 15;
      add(g, "path", {
        d: vertical ? "M" + start + " " + p + "H19" : "M" + p + " " + start + "V19",
        stroke: major ? "#111" : "#b3a9b4"
      });
      if (major) {
        var a = vertical ? { x: 0, y: 0, transform: "translate(10 " + p + ") rotate(-90)" } : { x: p - 1, y: 10 };
        if (t === 0) a.class = "zero";
        add(g, "text", a, t / 10);
      }
    }
  }
  ruler(document.getElementById("ruler-x"), false, X0 - 65, -9, 14);
  ruler(document.getElementById("ruler-y"), true, Y0 - 154, -9, 2);

  var LAT = 35.65 * RAD, G = 112.9, FY = 525.3;
  var CENTER = [X0, FY + G / Math.tan(LAT)];

  // Tip of the shadow for hour angle h and declination d, in degrees.
  function shadow(h, d) {
    h *= RAD; d *= RAD;
    var s = Math.sin(LAT) * Math.sin(d) + Math.cos(LAT) * Math.cos(d) * Math.cos(h);
    if (s < 0.02) return null;
    return [X0 + G * Math.cos(d) * Math.sin(h) / s,
      FY - G * (Math.sin(LAT) * Math.cos(d) * Math.cos(h) - Math.cos(LAT) * Math.sin(d)) / s];
  }

  var dial = document.getElementById("dial");
  for (var k = -11; k <= 11; k++) {
    var h = k * 7.5, whole = k % 2 === 0;
    var a = shadow(h, 23.44), b = shadow(h, -23.44);
    if (!b) b = [a[0] + (a[0] - CENTER[0]) * 4, a[1] + (a[1] - CENTER[1]) * 4];
    add(dial, "path", { d: "M" + a + "L" + b, stroke: whole ? "#000" : "#7c7568", "stroke-width": whole ? 2 : 1, "shape-rendering": "crispEdges" });
  }

  [[-20.15, "#8c86c8", 1], [-11.47, "#8c86c8", 1], [0, "#2a80b0", 1], [11.47, "#bc8c80", 1], [20.15, "#bc8c80", 1],
    [-23.44, "#0a0a78", 2], [23.44, "#9c1408", 2]].forEach(function (arc) {
    var pts = [];
    for (var h = -88; h <= 88; h += 1) {
      var p = shadow(h, arc[0]);
      if (p) pts.push(p[0].toFixed(1) + "," + p[1].toFixed(1));
    }
    add(dial, "path", { d: "M" + pts.join("L"), stroke: arc[1], "stroke-width": arc[2], "shape-rendering": "crispEdges" });
  });

  var names = ["VII", "VIII", "IX", "X", "XI", "XII", "I", "II", "III", "IV", "V"];
  var numerals = document.getElementById("numerals");
  names.forEach(function (name, i) {
    var h = (i - 5) * 15;
    var angle = Math.atan(Math.tan(h * RAD) * Math.sin(LAT));
    function label(p, out) {
      var x = p[0] + Math.sin(angle) * out, y = p[1] - Math.cos(angle) * out;
      add(numerals, "text", {
        y: 5,
        class: h ? "hour" : "noon",
        transform: "translate(" + x.toFixed(1) + " " + y.toFixed(1) + ") rotate(" + (angle / RAD).toFixed(1) + ")"
      }, name);
    }
    label(shadow(h, 23.44), -10);
    if (Math.abs(h) <= 45) label(shadow(h, -23.44), 9);
  });
})();
```
